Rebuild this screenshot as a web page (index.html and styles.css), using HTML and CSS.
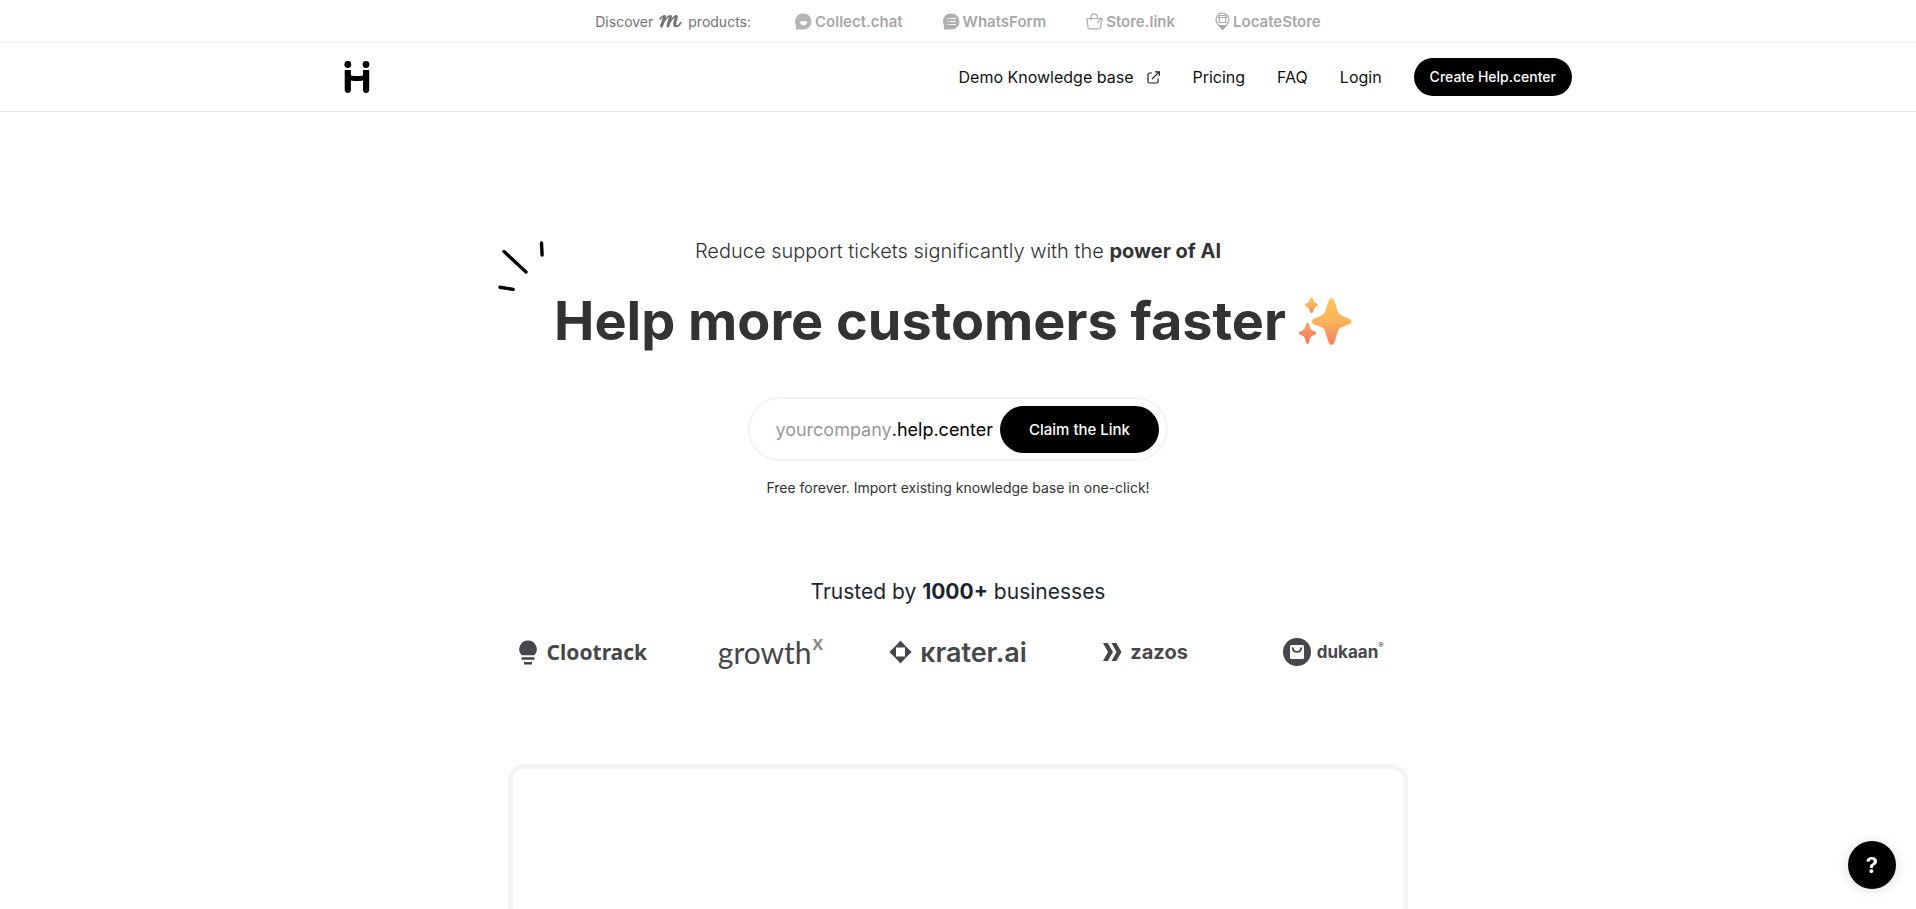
FILE: index.html
```html
<!DOCTYPE html>
<html lang="en">
<head>
    <meta charset="UTF-8">
    <meta name="viewport" content="width=device-width, initial-scale=1.0">
    <title>Help.center</title>
    <link rel="stylesheet" href="styles.css">
</head>
<body>
    <div class="topbar">
        <span class="discover">
            Discover
            <svg width="23" height="14" viewBox="0 0 23 14" fill="none" stroke="#757575" stroke-linecap="round" stroke-linejoin="round"><path stroke-width="3" d="M5.500 2.500C5 6 3.500 9 2.500 12M11.500 2.500C11 6 9.500 9 9 12M17.300 2.500C17.500 5 14.500 9.500 16 11.500"/><path stroke-width="1.600" d="M1 5C2.500 3 4 1.800 5.500 2M3 11C5 7 8.500 2 11.500 2M9.500 11C11.500 7 14.500 2 17.300 2M16 12C18 13 20.500 11 22 8.500"/></svg>
            products:
        </span>
        <a href="#" class="product">
            <svg width="17" height="17" viewBox="0 0 17 17"><path fill="#b5b5b5" d="M8.500 .5a8 8 0 1 1 0 16H.8l.4-3.600A8 8 0 0 1 8.500 .5z"/><path fill="#fff" d="M5 8.300h7.200c0 2.400-1.500 4-3.600 4S5 10.700 5 8.300z"/></svg>
            Collect.chat
        </a>
        <a href="#" class="product">
            <svg width="17" height="17" viewBox="0 0 17 17"><path fill="#b0b0b0" d="M8.500 .5a8 8 0 1 1 0 16H.8l.4-3.600A8 8 0 0 1 8.500 .5z"/><path stroke="#fff" stroke-width="1" d="M6.500 5.500h6.500M6.500 8.500h6.500M6.500 11.500h6.500M4 5.500h1.300M4 8.500h1.300M4 11.500h1.300"/></svg>
            WhatsForm
        </a>
        <a href="#" class="product">
            <svg width="17" height="17" viewBox="0 0 17 17" fill="none" stroke="#aaa" stroke-width="1.200" stroke-linecap="round" stroke-linejoin="round"><path d="M12 5.500H1l1 9a1.500 1.500 0 0 0 1.500 1.300h9.500a1.500 1.500 0 0 0 1.500-1.300l.7-5M5 7V4a3.200 3.200 0 0 1 6.400 0v1M11.500 9.500l4-4M13 5.500h3v3"/></svg>
            Store.link
        </a>
        <a href="#" class="product">
            <svg width="15" height="19" viewBox="0 0 15 19" fill="none" stroke="#aaa" stroke-width="1.200" stroke-linejoin="round"><path d="M7.500 1a6.500 6.500 0 0 1 6.500 6.500c0 3.500-3 6.500-6.500 9.800C4 14 1 11 1 7.500A6.500 6.500 0 0 1 7.500 1z"/><path d="M3.500 5.500l.8-2h6.400l.8 2zM4.200 6v4.500h6.600V6"/><path fill="#aaa" stroke="none" d="M3.300 13h8.400l-4.200 5.500z"/></svg>
            LocateStore
        </a>
    </div>

    <header class="header">
        <div class="header-inner">
            <a href="#" class="logo" aria-label="Help.center">
                <svg width="26" height="32" viewBox="0 0 26 32"><circle cx="3.800" cy="3.500" r="3.400"/><circle cx="22" cy="3.500" r="3.400"/><path d="M.7 9h6.200v5.400Q13 15.800 19 14.400V9h6.200v19.800a3.100 3.100 0 0 1-6.200 0V19.500Q13 20.700 6.900 19.500v9.300a3.100 3.100 0 0 1-6.200 0z"/></svg>
            </a>
            <nav class="nav">
                <a href="#" class="demo">
                    Demo Knowledge base
                    <svg width="13" height="13" viewBox="0 0 13 13" fill="none" stroke="#222" stroke-width="1.200"><path d="M5 2H2.500A1.500 1.500 0 0 0 1 3.500v7A1.500 1.500 0 0 0 2.500 12h7a1.500 1.500 0 0 0 1.500-1.500V7.500M8 .8h4.300V5M12.200 .9L5 8"/></svg>
                </a>
                <a href="#">Pricing</a>
                <a href="#">FAQ</a>
                <a href="#">Login</a>
                <a href="#" class="create">Create Help.center</a>
            </nav>
        </div>
    </header>

    <main class="hero">
        <p class="tagline">Reduce support tickets significantly with the <strong>power of AI</strong></p>
        <h1>
            <svg class="rays" width="48" height="50" viewBox="0 0 48 50" stroke="#000" stroke-width="3.400" stroke-linecap="round"><path d="M43.500 2l.6 12M6 10.500l22 20.500M2 46.200l13.200 2.200"/></svg>
            Help more customers faster
            <svg class="sparkles" width="54" height="50" viewBox="0 0 54 50">
                <defs>
                    <linearGradient id="gold" x1="0" y1="0" x2="0" y2="1">
                        <stop offset="0" stop-color="#f9c850"/>
                        <stop offset=".5" stop-color="#fbb35c"/>
                        <stop offset="1" stop-color="#f67d67"/>
                    </linearGradient>
                    <linearGradient id="coral" x1="0" y1="0" x2="0" y2="1">
                        <stop offset="0" stop-color="#fba457"/>
                        <stop offset="1" stop-color="#f9736f"/>
                    </linearGradient>
                </defs>
                <path fill="url(#gold)" d="M31 3Q33.500-1 36 3C38.500 8 38.500 14 42 17.500Q45 19.500 51 21.500Q56 24.500 51 27.500Q45 29 42 31C38.500 35 38.500 41 36 46Q33.500 50 31 46C28.500 41 28.500 35 25 31Q22 29 16 27.500Q11 24.500 16 21.500Q22 19.500 25 17.500C28.500 14 28.500 8 31 3z"/>
                <path fill="url(#gold)" d="M12 1.500Q13.500-.5 15 1.500C16 5 16.500 5.500 19 6.500Q21 8 19 9.500C16.500 10.500 16 11 15 15Q13.500 17 12 15C11 11 10.500 10.500 8 9.500Q6 8 8 6.500C10.500 5.500 11 5 12 1.500z"/>
                <path fill="url(#coral)" d="M8 27Q9.500 24.500 11 27C12 32 13 33 17 34.500Q19.500 36 17 37.800C13 39 12 40 11 45.500Q9.500 48.500 8 45.500C7 40 6 39 2 37.800Q-.5 36 2 34.500C6 33 7 32 8 27z"/>
            </svg>
        </h1>
        <form class="claim">
            <input type="text" id="company" placeholder="yourcompany">
            <label for="company">.help.center</label>
            <button type="submit">Claim the Link</button>
        </form>
        <p class="note">Free forever. Import existing knowledge base in one-click!</p>

        <h2>Trusted by <strong>1000+</strong> businesses</h2>
        <div class="brands">
            <div class="brand clootrack">
                <svg width="18" height="25" viewBox="0 0 18 25" fill="#47474b"><path d="M9 .5a8.800 8.800 0 0 1 6.500 14.700H2.500A8.800 8.800 0 0 1 9 .5zM2.500 17.200h13v2.600h-13zM5 22h8v2.400H5z"/></svg>
                <span>Clootrack</span>
            </div>
            <div class="brand growthx"><span>growth</span><sup>x</sup></div>
            <div class="brand krater">
                <svg width="23" height="24" viewBox="0 0 23 24" fill="#47474b"><path fill-rule="evenodd" d="M11.500 .5L17 6.500L22.700 12L17 17.500L11.500 23.500L6 17.500L.3 12L6 6.500zM7 7.500v9h9v-9z"/></svg>
                <span>κrater.ai</span>
            </div>
            <div class="brand zazos">
                <svg width="19" height="18" viewBox="0 0 19 18" fill="#47474b"><path d="M0 0h4.800l5.200 9-5.200 9H0l5-9zM8.500 0h4.800l5.200 9-5.200 9H8.500l5-9z"/></svg>
                <span>zazos</span>
            </div>
            <div class="brand dukaan">
                <svg width="28" height="28" viewBox="0 0 28 28"><circle cx="14" cy="14" r="14" fill="#47474b"/><rect x="7" y="7" width="14" height="14" rx="1.500" fill="#fff"/><path d="M9.800 10.200c.5 5 7.900 5 8.400 0" fill="none" stroke="#47474b" stroke-width="1.800" stroke-linecap="round"/></svg>
                <span>dukaan</span><sup>®</sup>
            </div>
        </div>

        <div class="preview"></div>
    </main>

    <button type="button" class="help" aria-label="Help">?</button>
</body>
</html>
```

FILE: styles.css
```css
* {
    box-sizing: border-box;
}
body {
    margin: 0;
    height: 100vh;
    overflow: hidden;
    background: #fff;
    color: #333;
    font-family: Inter, "Open Sans", sans-serif;
}
a {
    color: inherit;
    text-decoration: none;
}
svg {
    flex-shrink: 0;
}
.topbar {
    display: flex;
    align-items: center;
    justify-content: center;
    height: 43px;
    border-bottom: 1px solid #eee;
    font-size: 14px;
    color: #757575;
}
.discover {
    display: flex;
    align-items: center;
    gap: 6px;
    margin-right: 44px;
}
.product {
    display: flex;
    align-items: center;
    gap: 3px;
    margin-right: 40px;
    font-size: 15px;
    font-weight: 600;
    color: #a8a8a8;
}
.product:last-child {
    margin-right: 0;
}
.header {
    border-bottom: 1px solid #e5e5e5;
}
.header-inner {
    display: flex;
    align-items: center;
    justify-content: space-between;
    max-width: 1260px;
    height: 68px;
    margin: 0 auto;
    padding: 0 16px;
}
.logo {
    display: flex;
}
.nav {
    display: flex;
    align-items: center;
    gap: 32px;
    font-size: 16px;
    color: #111;
}
.demo {
    display: flex;
    align-items: center;
    gap: 14px;
}
.create {
    padding: 0 16px;
    border-radius: 20px;
    background: #000;
    color: #fff;
    font-size: 14px;
    font-weight: 500;
    line-height: 38px;
}
.hero {
    display: flex;
    flex-direction: column;
    align-items: center;
    padding: 124px 16px 0;
}
.tagline {
    margin: 0;
    font-size: 20px;
    font-weight: 300;
    line-height: 30px;
}
strong {
    font-weight: 700;
}
h1 {
    position: relative;
    display: flex;
    align-items: center;
    gap: 12px;
    margin: 20px 10px 0 0;
    font-size: 54px;
    font-weight: 700;
    line-height: 70px;
}
.rays {
    position: absolute;
    top: -45px;
    left: -56px;
}
.sparkles {
    margin-top: 2px;
}
.claim {
    display: flex;
    align-items: center;
    width: 420px;
    max-width: 100%;
    height: 64px;
    margin: 41px 0 0;
    padding: 0 7px 0 21px;
    border: 2px solid #f4f4f4;
    border-radius: 32px;
    font-size: 18px;
    color: #000;
}
.claim input {
    flex: 1;
    min-width: 0;
    padding: 0;
    border: none;
    outline: none;
    background: none;
    font: inherit;
    text-align: right;
}
.claim input::placeholder {
    color: #999;
}
.claim button {
    width: 159px;
    height: 47px;
    margin-left: 7px;
    border: none;
    border-radius: 24px;
    background: #000;
    color: #fff;
    font: inherit;
    font-size: 15px;
    font-weight: 500;
    cursor: pointer;
}
.note {
    margin: 17px 0 0;
    font-size: 14px;
    line-height: 20px;
}
h2 {
    margin: 78px 0 0;
    font-size: 21px;
    font-weight: 400;
    line-height: 32px;
    color: #1e2532;
}
.brands {
    display: grid;
    grid-template-columns: repeat(5, 1fr);
    width: 100%;
    max-width: 938px;
    margin-top: 22px;
}
.brand {
    display: flex;
    align-items: center;
    justify-content: center;
    height: 44px;
    gap: 8px;
    color: #47474b;
}
.brand sup {
    align-self: flex-start;
}
.clootrack {
    gap: 10px;
    font-family: "Noto Sans", sans-serif;
    font-size: 21px;
    font-weight: 700;
}
.growthx {
    gap: 1px;
    font-family: Lato, sans-serif;
    font-size: 30px;
}
.growthx sup {
    font-size: 20px;
    font-weight: 700;
    line-height: 24px;
    color: #8a8a8d;
}
.krater {
    font-size: 27px;
    font-weight: 600;
}
.zazos {
    font-size: 20px;
    font-weight: 700;
}
.dukaan {
    gap: 6px;
    font-size: 17px;
    font-weight: 700;
}
.dukaan sup {
    margin-left: -6px;
    font-size: 8px;
    font-weight: 400;
    line-height: 30px;
}
.preview {
    width: 100%;
    max-width: 900px;
    height: 500px;
    margin-top: 90px;
    border: 5px solid #f4f4f4;
    border-radius: 16px;
}
.help {
    position: fixed;
    right: 20px;
    bottom: 20px;
    width: 48px;
    height: 48px;
    border: none;
    border-radius: 50%;
    background: #000;
    box-shadow: 0 1px 12px rgba(0,0,0,0.15);
    color: #fff;
    font-family: inherit;
    font-size: 22px;
    font-weight: 700;
    cursor: pointer;
}
```
